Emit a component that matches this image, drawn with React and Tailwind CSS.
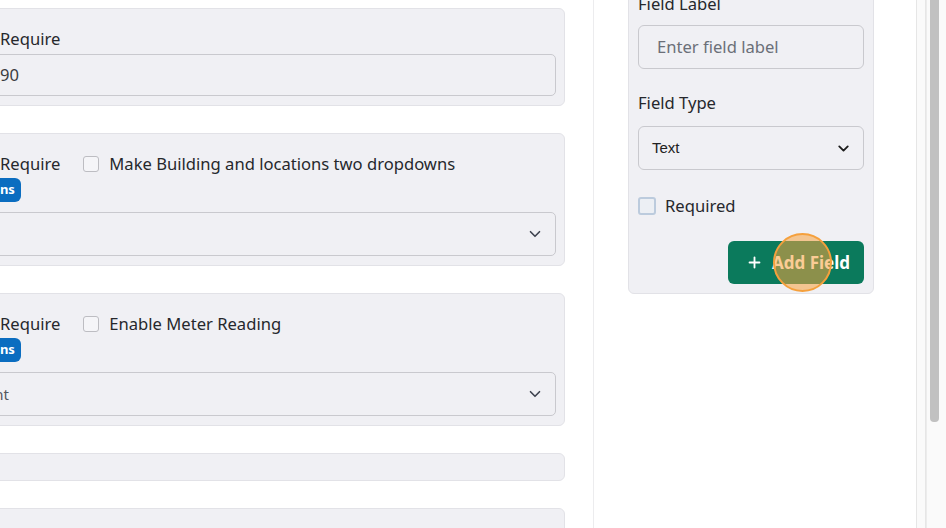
import React from "react";
import { Plus, ChevronDown } from "lucide-react";

const font = { fontFamily: '"Noto Sans", "Open Sans", sans-serif' };

function Check({ className = "" }) {
  return (
    <span
      className={
        "inline-block w-4 h-4 shrink-0 rounded-[3px] border border-[#bdbdc2] bg-[#f5f5f8] " +
        className
      }
    />
  );
}

function Badge({ children }) {
  return (
    <span className="inline-flex h-6 items-center rounded-md bg-[#0b6dc0] px-[6px] text-[13px] font-bold text-white">
      {children}
    </span>
  );
}

function SelectBox({ value, valueClass = "" }) {
  return (
    <div className="flex h-[44px] items-center justify-between overflow-hidden rounded-[5px] border border-[#c9c9ce] pl-[25px] pr-[11px] text-[15px] text-[#55585f]">
      <span className={"whitespace-nowrap " + valueClass}>{value}</span>
      <ChevronDown className="h-[18px] w-[18px] shrink-0 text-[#3f4450]" strokeWidth={2.2} />
    </div>
  );
}

// field card with a "Require" toggle, an extra option and a dropdown
function OptionCard({ option, badge, value, valueClass }) {
  return (
    <div className="rounded-md border border-[#e2e2e7] bg-[#f0f0f4] pb-[9px] pl-[13px] pr-[8px] pt-[18px]">
      <div className="flex h-6 items-center text-[16.6px] text-[#26282c]">
        <Check />
        <span className="ml-[10px]">Require</span>
        <Check className="ml-[23px]" />
        <span className="ml-[10px]">{option}</span>
      </div>
      <div className="mt-[2px] flex">
        <Badge>{badge}</Badge>
      </div>
      <div className="mt-[10px]">
        <SelectBox value={value} valueClass={valueClass} />
      </div>
    </div>
  );
}

export default function App() {
  return (
    <div className="flex h-[528px] w-[946px] overflow-hidden bg-white" style={font}>
      {/* field list */}
      <div className="w-[593px] shrink-0 overflow-hidden">
        <div className="-ml-[40px] flex w-[605px] flex-col gap-[27px] pt-[8px]">
          <div className="rounded-md border border-[#e2e2e7] bg-[#f0f0f4] pb-[9px] pl-[13px] pr-[8px] pt-[18px]">
            <div className="flex h-6 items-center text-[16.6px] text-[#26282c]">
              <Check />
              <span className="ml-[10px]">Require</span>
            </div>
            <div className="mt-[3px] flex h-[42px] items-center rounded-[5px] border border-[#c9c9ce] pl-[25px] text-[16.6px] text-[#3a3c40]">
              90
            </div>
          </div>

          <OptionCard option="Make Building and locations two dropdowns" badge="Icons" value="" />
          <OptionCard
            option="Enable Meter Reading"
            badge="Icons"
            value="Department"
            valueClass="-ml-[77px]"
          />

          <div className="h-[28px] rounded-md border border-[#e2e2e7] bg-[#f0f0f4]" />
          <div className="h-[60px] rounded-md border border-[#e2e2e7] bg-[#f0f0f4]" />
        </div>
      </div>

      {/* add field panel */}
      <div className="w-[323px] shrink-0 border-l border-[#ececee] pl-[34px]">
        <div className="-mt-[19px] w-[246px] rounded-md border border-[#e2e2e7] bg-[#f0f0f4] px-[9px] pb-[9px] pt-[10px]">
          <div className="h-6 text-[16.6px] leading-6 text-[#26282c]">Field Label</div>
          <div className="mt-[9px] flex h-[44px] items-center rounded-md border border-[#c9c9ce] pl-[18px] text-[16.6px] text-[#6b6f78]">
            Enter field label
          </div>

          <div className="mt-[22px] h-6 text-[16.6px] leading-6 text-[#26282c]">Field Type</div>
          <div
            className="mt-[11px] flex h-[44px] items-center justify-between rounded-md border border-[#c9c9ce] pl-[13px] pr-[11px] text-[15px] text-[#222]"
            style={{ fontFamily: '"Liberation Sans", Arial, sans-serif' }}
          >
            <span>Text</span>
            <ChevronDown className="h-[17px] w-[17px] text-[#1c1c1c]" strokeWidth={2.6} />
          </div>

          <div className="mt-[24px] flex h-6 items-center">
            <span className="inline-block h-[18px] w-[18px] rounded-[3px] border-2 border-[#bccbdd] bg-[#eceff4]" />
            <span className="ml-[9px] text-[16.6px] text-[#26282c]">Required</span>
          </div>

          <div className="mt-[23px] flex justify-end">
            <button className="relative flex h-[43px] w-[136px] items-center gap-[9px] rounded-md bg-[#0b7a5c] pl-[18px] text-[17px] font-bold text-white">
              <Plus className="h-[17px] w-[17px]" strokeWidth={2.6} />
              Add Field
              {/* click marker */}
              <span className="absolute left-[45px] top-[-8px] h-[59px] w-[59px] rounded-full border-2 border-[#f5a03c] bg-[#f7a23e]/55" />
            </button>
          </div>
        </div>
      </div>

      {/* scroll gutter */}
      <div className="flex flex-1">
        <div className="w-[10px] border-l border-r border-[#e6e6e6] bg-[#fafafa]" />
        <div className="flex flex-1 border-l border-[#ececec] bg-[#fafafa] pl-[3px]">
          <div className="h-[422px] w-[9px] rounded-b-[4px] bg-[#c1c1c1]" />
        </div>
      </div>
    </div>
  );
}
